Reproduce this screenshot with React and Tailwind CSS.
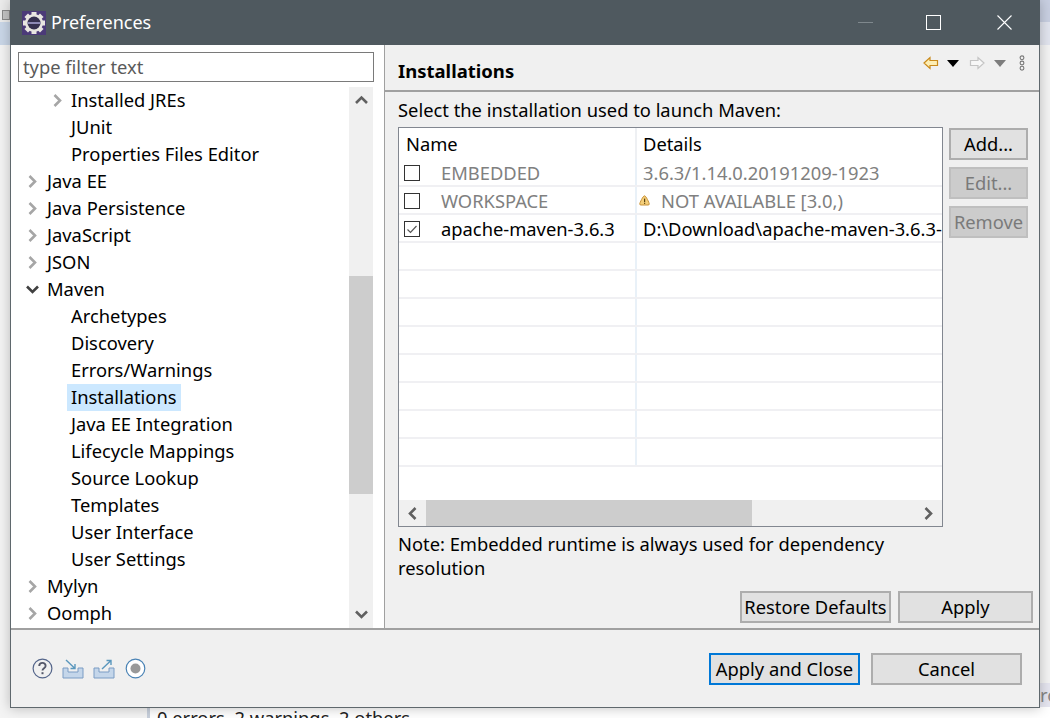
const TREE = [
  { label: 'Installed JREs', depth: 1, arrow: 'right' },
  { label: 'JUnit', depth: 1 },
  { label: 'Properties Files Editor', depth: 1 },
  { label: 'Java EE', depth: 0, arrow: 'right' },
  { label: 'Java Persistence', depth: 0, arrow: 'right' },
  { label: 'JavaScript', depth: 0, arrow: 'right' },
  { label: 'JSON', depth: 0, arrow: 'right' },
  { label: 'Maven', depth: 0, arrow: 'down' },
  { label: 'Archetypes', depth: 1 },
  { label: 'Discovery', depth: 1 },
  { label: 'Errors/Warnings', depth: 1 },
  { label: 'Installations', depth: 1, selected: true },
  { label: 'Java EE Integration', depth: 1 },
  { label: 'Lifecycle Mappings', depth: 1 },
  { label: 'Source Lookup', depth: 1 },
  { label: 'Templates', depth: 1 },
  { label: 'User Interface', depth: 1 },
  { label: 'User Settings', depth: 1 },
  { label: 'Mylyn', depth: 0, arrow: 'right' },
  { label: 'Oomph', depth: 0, arrow: 'right' },
]

const INSTALLS = [
  { name: 'EMBEDDED', details: '3.6.3/1.14.0.20191209-1923', muted: true },
  { name: 'WORKSPACE', details: 'NOT AVAILABLE [3.0,)', muted: true, warn: true },
  { name: 'apache-maven-3.6.3', details: 'D:\\Download\\apache-maven-3.6.3-bin\\apache-maven-3.6.3', checked: true },
]

function Chevron({ dir, color = '#a6a6a6' }) {
  const d = {
    right: 'M3.5 1 L9 6.5 L3.5 12',
    down: 'M1 3.5 L6.5 9 L12 3.5',
    up: 'M1 9 L6.5 3.5 L12 9',
    left: 'M9.5 1 L4 6.5 L9.5 12',
  }[dir]
  return (
    <svg width="13" height="13" viewBox="0 0 13 13" fill="none">
      <path d={d} stroke={color} strokeWidth="2.6" />
    </svg>
  )
}

function EclipseLogo() {
  const teeth = [0, 45, 90, 135, 180, 225, 270, 315]
  return (
    <svg width="24" height="24" viewBox="0 0 24 24">
      <rect width="24" height="24" fill="#4b3a78" />
      {teeth.map(a => (
        <rect key={a} x="9.5" y="1" width="5" height="5" fill="#e8e6e0" transform={`rotate(${a} 12 12)`} />
      ))}
      <circle cx="12" cy="12" r="9" fill="#e8e6e0" />
      <circle cx="12" cy="12" r="6.5" fill="#35304f" />
      <rect x="5.5" y="11" width="13" height="2" fill="#8d89b5" />
    </svg>
  )
}

function TreeRow({ item }) {
  return (
    <div className={`flex items-center h-[27px] ${item.depth ? 'pl-[40px]' : 'pl-[15px]'}`}>
      <span className={`flex justify-start shrink-0 ${item.depth ? 'w-[17px]' : 'w-[18px]'}`}>
        {item.arrow && (
          <Chevron dir={item.arrow} color={item.arrow === 'down' ? '#404040' : '#a6a6a6'} />
        )}
      </span>
      <span className={`h-[27px] leading-[25px] px-1 -ml-[1px] ${item.selected ? 'bg-[#cce8ff]' : ''}`}>
        {item.label}
      </span>
    </div>
  )
}

function Scrollbar() {
  return (
    <div className="w-[24px] h-[541px] mr-[1px] flex flex-col shrink-0 bg-[#f0f0f0]">
      <div className="h-[27px] flex items-center justify-center"><Chevron dir="up" color="#606060" /></div>
      <div className="flex-1 flex flex-col pt-[162px] pb-[107px]">
        <div className="flex-1 bg-[#cdcdcd]" />
      </div>
      <div className="h-[27px] flex items-center justify-center"><Chevron dir="down" color="#606060" /></div>
    </div>
  )
}

function Checkbox({ checked }) {
  return (
    <span className="w-[16px] h-[16px] border border-[#333] bg-white flex items-center justify-center shrink-0">
      {checked && (
        <svg width="12" height="12" viewBox="0 0 12 12" fill="none">
          <path d="M1.5 6.5 L4.5 9.5 L10.5 3" stroke="#555" strokeWidth="1.2" />
        </svg>
      )}
    </span>
  )
}

function WarnIcon() {
  return (
    <svg width="11" height="11" viewBox="0 0 11 11" className="shrink-0">
      <path d="M5.5 0.8 C7 0.8 10.3 8 10.3 9 Q10.3 10 9 10 L2 10 Q0.7 10 0.7 9 C0.7 8 4 0.8 5.5 0.8 Z" fill="#f5cf7a" stroke="#c8923a" />
      <rect x="5" y="3.6" width="1.2" height="3.4" fill="#5a4310" />
      <rect x="5" y="7.7" width="1.2" height="1.2" fill="#5a4310" />
    </svg>
  )
}

function Btn({ children, className = '', disabled }) {
  return (
    <div
      className={`flex items-center justify-center border-2 ${
        disabled
          ? 'bg-[#cccccc] border-[#bfbfbf] text-[#7a7a7a]'
          : 'bg-[#e1e1e1] border-[#adadad] text-black'
      } ${className}`}
    >
      {children}
    </div>
  )
}

function InstallTable() {
  return (
    <div className="w-[545px] h-[400px] border border-[#828790] bg-white flex flex-col">
      <div className="flex h-[31px] shrink-0">
        <div className="w-[238px] pl-[7px] border-r-2 border-[#eef0f3] leading-[32px]">Name</div>
        <div className="pl-[6px] leading-[32px]">Details</div>
      </div>
      <div className="flex-1 overflow-hidden">
        {INSTALLS.map(row => (
          <div key={row.name} className="flex h-[28px] border-b-2 border-[#f0f0f3]">
            <div className={`w-[238px] flex items-center pl-[5px] pt-px gap-[21px] border-r-2 border-[#e9f1f8] ${row.muted ? 'text-[#808080]' : ''}`}>
              <Checkbox checked={row.checked} />
              <span>{row.name}</span>
            </div>
            <div className={`flex-1 flex items-center pt-px whitespace-nowrap overflow-hidden ${row.warn ? 'pl-[2px] gap-[11px]' : 'pl-[6px]'} ${row.muted ? 'text-[#808080]' : ''}`}>
              {row.warn && <WarnIcon />}
              <span>{row.details}</span>
            </div>
          </div>
        ))}
        {[0, 1, 2, 3, 4, 5, 6, 7].map(i => (
          <div key={i} className="flex h-[28px] border-b-2 border-[#f0f0f3]">
            <div className="w-[238px] border-r-2 border-[#e9f1f8]" />
          </div>
        ))}
      </div>
      <div className="h-[26px] shrink-0 bg-[#f0f0f0] flex items-center">
        <span className="w-[27px] flex justify-center"><Chevron dir="left" color="#606060" /></span>
        <div className="w-[326px] h-full bg-[#cdcdcd]" />
        <div className="flex-1" />
        <span className="w-[27px] flex justify-center"><Chevron dir="right" color="#606060" /></span>
      </div>
    </div>
  )
}

function NavIcons() {
  return (
    <div className="flex items-center">
      <svg width="16" height="14" viewBox="0 0 16 14">
        <path d="M1 7 L7 1.5 L7 4.5 L14.5 4.5 L14.5 9.5 L7 9.5 L7 12.5 Z" fill="#fdeeb4" stroke="#c98a1b" strokeWidth="1.2" />
      </svg>
      <svg width="12" height="7" viewBox="0 0 12 7" className="ml-[8px]"><path d="M0 0 H12 L6 7 Z" fill="#000" /></svg>
      <svg width="16" height="14" viewBox="0 0 16 14" className="ml-[10px]">
        <path d="M15 7 L9 1.5 L9 4.5 L1.5 4.5 L1.5 9.5 L9 9.5 L9 12.5 Z" fill="#f7f7f7" stroke="#c4c4c4" strokeWidth="1.2" />
      </svg>
      <svg width="12" height="7" viewBox="0 0 12 7" className="ml-[9px]"><path d="M0 0 H12 L6 7 Z" fill="#7d7d7d" /></svg>
      <svg width="6" height="16" viewBox="0 0 6 16" className="ml-[13px]" fill="none" stroke="#777" strokeWidth="1.1">
        <circle cx="3" cy="2.8" r="1.9" /><circle cx="3" cy="8" r="1.9" /><circle cx="3" cy="13.2" r="1.9" />
      </svg>
    </div>
  )
}

function FooterIcons() {
  return (
    <div className="flex items-center gap-[9px]">
      <svg width="21" height="21" viewBox="0 0 21 21" fill="none">
        <circle cx="10.5" cy="10.5" r="9.4" stroke="#54658a" strokeWidth="1.2" />
        <path d="M7.2 8 C7.4 3.8 13.8 4 13.6 8 C13.5 10.3 10.5 10.2 10.5 12.6" stroke="#54586a" strokeWidth="1.9" />
        <rect x="9.5" y="14.2" width="2" height="2" fill="#54586a" />
      </svg>
      <svg width="22" height="20" viewBox="0 0 22 20" fill="none">
        <path d="M1 9 V19 H21 V9 H16 V13 H6 V9 Z" fill="#c4d6ea" stroke="#7b9cc4" />
        <path d="M4 1 L13 9.5 M13 5 V9.5 H8.5" stroke="#5a97bd" strokeWidth="1.4" />
      </svg>
      <svg width="22" height="20" viewBox="0 0 22 20" fill="none">
        <path d="M1 9 V19 H21 V9 H16 V13 H6 V9 Z" fill="#c4d6ea" stroke="#7b9cc4" />
        <path d="M9 10 L18 1.5 M13.5 1.5 H18 V6" stroke="#5a97bd" strokeWidth="1.4" />
      </svg>
      <svg width="21" height="21" viewBox="0 0 21 21" fill="none" className="ml-[1px]">
        <circle cx="10.5" cy="10.5" r="9.3" fill="#fff" stroke="#4a83b5" strokeWidth="1.2" />
        <circle cx="10.5" cy="10.5" r="5" fill="#999" />
      </svg>
    </div>
  )
}

export default function App() {
  return (
    <div
      className="relative w-[1050px] h-[718px] overflow-hidden bg-[#f4f4f4] text-black text-[18.33px]"
      style={{ fontFamily: '"Noto Sans", "Open Sans", sans-serif' }}
    >
      {/* app behind the dialog */}
      <div className="absolute left-0 top-0 w-full h-[45px] flex flex-col">
        <div className="h-[22px] bg-[#ececec] relative">
          <div className="absolute left-[2px] top-[10px] w-[8px] h-[10px] bg-[#c4c4c4] border border-[#8a8a8a]" />
        </div>
        <div className="h-[23px] bg-[#cad7e8]" />
      </div>
      <div className="absolute left-[1040px] top-0 w-[10px] h-[45px] flex flex-col">
        <div className="h-[22px] bg-[#c9d0e2]" />
        <div className="h-[23px] bg-[#e2e5ef]" />
      </div>
      <div className="absolute left-[1040px] top-[683px] w-[10px] h-[24px] bg-[#e6e6f0] text-[#888] leading-[24px] overflow-hidden">ro</div>
      <div className="absolute left-[147px] top-[707px] h-[11px] w-[903px] pl-[7px] border-l-[3px] border-[#c8d0dc] bg-white leading-[22px] whitespace-nowrap text-[#222]">
        0 errors, 2 warnings, 2 others
      </div>

      {/* dialog */}
      <div className="relative ml-[10px] w-[1030px] h-[708px] flex flex-col border-x border-b border-[#5f686d] shadow-[0_0_12px_rgba(0,0,0,0.25)] bg-[#f0f0f0]">
        <div className="h-[45px] shrink-0 bg-[#4f595f] text-white flex items-center pl-[12px] -mx-px">
          <EclipseLogo />
          <span className="ml-[5px] text-[18px]">Preferences</span>
          <div className="ml-auto flex items-center">
            <div className="w-[15px] h-px bg-[#7f888d] mr-[53px]" />
            <div className="w-[15px] h-[15px] border border-white mr-[56px]" />
            <svg width="15" height="15" viewBox="0 0 15 15" className="mr-[28px]" fill="none" stroke="#fff" strokeWidth="1.1">
              <path d="M0.5 0.5 L14.5 14.5 M14.5 0.5 L0.5 14.5" />
            </svg>
          </div>
        </div>

        <div className="flex-1 flex min-h-0">
          {/* tree side */}
          <div className="w-[374px] shrink-0 bg-white border-r border-[#a0a0a0] pl-[7px] pt-[7px]">
            <div className="w-[356px] h-[30px] border border-[#7a7a7a] pl-1 leading-[28px] text-[#5a5a5a]">type filter text</div>
            <div className="flex mt-[5px] w-[356px] h-[541px]">
              <div className="flex-1 -ml-[7px]">
                {TREE.map(item => <TreeRow key={item.label} item={item} />)}
              </div>
              <Scrollbar />
            </div>
          </div>

          {/* page side */}
          <div className="flex-1 flex flex-col">
            <div className="h-[47px] shrink-0 border-b-2 border-[#a0a0a0] flex items-start justify-between pl-[13px] pr-[14px]">
              <span className="font-bold text-[18.5px] leading-[52px]">Installations</span>
              <div className="pt-[10px]"><NavIcons /></div>
            </div>
            <div className="pl-[13px] pt-[5px] leading-[26px] h-[35px]">Select the installation used to launch Maven:</div>
            <div className="flex pl-[13px] gap-[6px]">
              <InstallTable />
              <div className="flex flex-col gap-[7px] pt-px">
                <Btn className="w-[79px] h-[32px]">Add...</Btn>
                <Btn className="w-[79px] h-[32px]" disabled>Edit...</Btn>
                <Btn className="w-[79px] h-[32px]" disabled>Remove</Btn>
              </div>
            </div>
            <p className="pl-[13px] pr-[100px] pt-[5px] leading-[24px]">
              Note: Embedded runtime is always used for dependency resolution
            </p>
            <div className="mt-auto flex justify-end gap-[7px] pr-[6px] pb-[5px]">
              <Btn className="w-[151px] h-[32px] whitespace-nowrap">Restore Defaults</Btn>
              <Btn className="w-[135px] h-[32px]">Apply</Btn>
            </div>
          </div>
        </div>

        <div className="h-[79px] shrink-0 border-t-2 border-[#a0a0a0] flex items-center justify-between pl-[21px] pr-[17px]">
          <FooterIcons />
          <div className="flex gap-[11px]">
            <Btn className="w-[151px] h-[32px] !border-[#0078d7] whitespace-nowrap">Apply and Close</Btn>
            <Btn className="w-[151px] h-[32px]">Cancel</Btn>
          </div>
        </div>
      </div>
    </div>
  )
}
